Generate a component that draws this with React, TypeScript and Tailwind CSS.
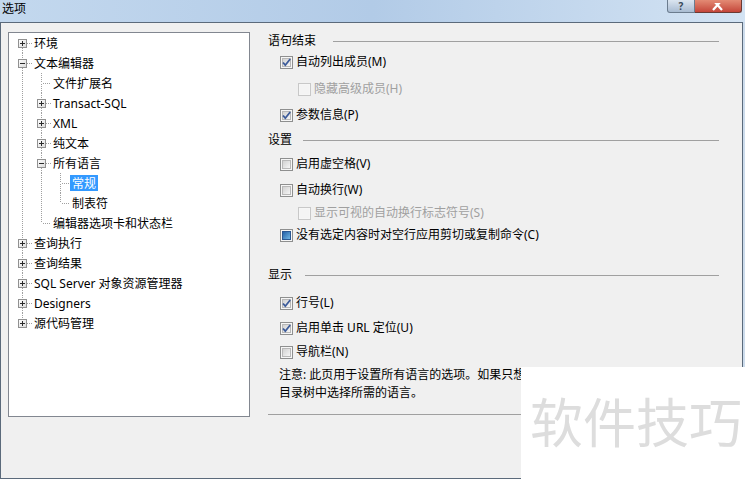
import React from "react";

const FONT = { fontFamily: '"Noto Sans", "Noto Sans CJK SC", sans-serif' };

type Row = {
  label: string;
  depth: number;
  exp?: "plus" | "minus";
  guides: boolean[]; // ancestor columns that carry a full vertical line
  top: boolean;
  bottom: boolean;
  selected?: boolean;
};

const rows: Row[] = [
  { label: "环境", depth: 0, exp: "plus", guides: [], top: false, bottom: true },
  { label: "文本编辑器", depth: 0, exp: "minus", guides: [], top: true, bottom: true },
  { label: "文件扩展名", depth: 1, guides: [true], top: true, bottom: true },
  { label: "Transact-SQL", depth: 1, exp: "plus", guides: [true], top: true, bottom: true },
  { label: "XML", depth: 1, exp: "plus", guides: [true], top: true, bottom: true },
  { label: "纯文本", depth: 1, exp: "plus", guides: [true], top: true, bottom: true },
  { label: "所有语言", depth: 1, exp: "minus", guides: [true], top: true, bottom: true },
  { label: "常规", depth: 2, guides: [true, true], top: true, bottom: true, selected: true },
  { label: "制表符", depth: 2, guides: [true, true], top: true, bottom: false },
  { label: "编辑器选项卡和状态栏", depth: 1, guides: [true], top: true, bottom: false },
  { label: "查询执行", depth: 0, exp: "plus", guides: [], top: true, bottom: true },
  { label: "查询结果", depth: 0, exp: "plus", guides: [], top: true, bottom: true },
  { label: "SQL Server 对象资源管理器", depth: 0, exp: "plus", guides: [], top: true, bottom: true },
  { label: "Designers", depth: 0, exp: "plus", guides: [], top: true, bottom: true },
  { label: "源代码管理", depth: 0, exp: "plus", guides: [], top: true, bottom: false },
];

function GuideCell({ full }: { full: boolean }) {
  return (
    <svg width="19" height="20" className="shrink-0">
      {full && <line x1="9.5" y1="0" x2="9.5" y2="20" stroke="#a0a0a0" strokeDasharray="1 1" />}
    </svg>
  );
}

function NodeCell({ row }: { row: Row }) {
  return (
    <svg width="19" height="20" className="shrink-0">
      <defs>
        <linearGradient id="exp" x1="0" y1="0" x2="1" y2="1">
          <stop offset="0" stopColor="#ffffff" />
          <stop offset="1" stopColor="#d9d9d9" />
        </linearGradient>
      </defs>
      {row.top && <line x1="9.5" y1="0" x2="9.5" y2="10" stroke="#a0a0a0" strokeDasharray="1 1" />}
      {row.bottom && <line x1="9.5" y1="11" x2="9.5" y2="20" stroke="#a0a0a0" strokeDasharray="1 1" />}
      <line x1={row.exp ? 14 : 11} y1="10.5" x2="19" y2="10.5" stroke="#a0a0a0" strokeDasharray="1 1" />
      {row.exp && (
        <g>
          <rect x="5.5" y="6.5" width="8" height="8" fill="url(#exp)" stroke="#919191" />
          <line x1="7" y1="10.5" x2="12" y2="10.5" stroke="#2b2b2b" />
          {row.exp === "plus" && <line x1="9.5" y1="8" x2="9.5" y2="13" stroke="#2b2b2b" />}
        </g>
      )}
    </svg>
  );
}

function Tree() {
  return (
    <div className="w-[242px] h-[385px] mt-[9px] ml-[7px] border border-[#828790] bg-white pl-[4px] shrink-0">
      {rows.map((r) => (
        <div key={r.label} className="flex items-center h-[20px]">
          {r.guides.map((g, i) => (
            <GuideCell key={i} full={g} />
          ))}
          <NodeCell row={r} />
          <span
            className={`h-[16px] leading-[17px] px-[2px] text-[12px] whitespace-nowrap ${
              r.selected ? "bg-[#3399ff] text-white" : "text-black"
            }`}
          >
            {r.label}
          </span>
        </div>
      ))}
    </div>
  );
}

function Check({ state, disabled }: { state: "on" | "off" | "mixed"; disabled?: boolean }) {
  return (
    <svg width="13" height="13" className="shrink-0">
      <defs>
        <linearGradient id="cbin" x1="0" y1="0" x2="1" y2="1">
          <stop offset="0" stopColor="#cfcfcf" />
          <stop offset="1" stopColor="#f8f8f8" />
        </linearGradient>
        <linearGradient id="cbmix" x1="0" y1="0" x2="1" y2="1">
          <stop offset="0" stopColor="#1d5aa3" />
          <stop offset="1" stopColor="#76bde9" />
        </linearGradient>
      </defs>
      <rect x="0.5" y="0.5" width="12" height="12" fill="#f6f6f6" stroke={disabled ? "#c8c8c8" : "#8e8f8f"} />
      {!disabled && <rect x="2.5" y="2.5" width="8" height="8" fill="url(#cbin)" stroke="#b8b8b8" />}
      {disabled && <rect x="2" y="2" width="9" height="9" fill="#f4f4f4" />}
      {state === "on" && (
        <path d="M3 6.5 L5.3 9.2 L10.2 3" fill="none" stroke="#3c5b9a" strokeWidth="1.8" />
      )}
      {state === "mixed" && <rect x="2.5" y="2.5" width="8" height="8" fill="url(#cbmix)" stroke="#2a5792" />}
    </svg>
  );
}

function Header({ label, gap, mt }: { label: string; gap: number; mt: string }) {
  return (
    <div className={`flex items-center h-[16px] ${mt}`}>
      <span className="text-[12px] text-black whitespace-nowrap">{label}</span>
      <div className="h-px flex-1 bg-[#a0a0a0]" style={{ marginLeft: gap }} />
    </div>
  );
}

function Option({
  label,
  state,
  disabled,
  indent,
  mt,
}: {
  label: string;
  state: "on" | "off" | "mixed";
  disabled?: boolean;
  indent?: boolean;
  mt: string;
}) {
  return (
    <div className={`flex items-center h-[16px] gap-[3px] ${indent ? "pl-[30px]" : "pl-[12px]"} ${mt}`}>
      <Check state={state} disabled={disabled} />
      <span className={`text-[12px] whitespace-nowrap ${disabled ? "text-[#a0a0a0]" : "text-black"}`}>{label}</span>
    </div>
  );
}

function OptionsPane() {
  return (
    <div className="ml-[18px] w-[451px] flex flex-col shrink-0">
      <Header label="语句结束" gap={17} mt="mt-[10px]" />
      <Option label="自动列出成员(M)" state="on" mt="mt-[5px]" />
      <Option label="隐藏高级成员(H)" state="off" disabled indent mt="mt-[11px]" />
      <Option label="参数信息(P)" state="on" mt="mt-[10px]" />

      <Header label="设置" gap={11} mt="mt-[9px]" />
      <Option label="启用虚空格(V)" state="off" mt="mt-[8px]" />
      <Option label="自动换行(W)" state="off" mt="mt-[10px]" />
      <Option label="显示可视的自动换行标志符号(S)" state="off" disabled indent mt="mt-[7px]" />
      <Option label="没有选定内容时对空行应用剪切或复制命令(C)" state="mixed" mt="mt-[6px]" />

      <Header label="显示" gap={13} mt="mt-[24px]" />
      <Option label="行号(L)" state="on" mt="mt-[12px]" />
      <Option label="启用单击 URL 定位(U)" state="on" mt="mt-[9px]" />
      <Option label="导航栏(N)" state="off" mt="mt-[8px]" />

      <div className="mt-[6px] pl-[11px] text-[12px] leading-[18px] text-black whitespace-nowrap">
        <div>注意: 此页用于设置所有语言的选项。如果只想更改某一种语言的选项，请在</div>
        <div>目录树中选择所需的语言。</div>
      </div>
      <div className="mt-[12px] h-px bg-[#a0a0a0]" />
    </div>
  );
}

export default function App() {
  return (
    <div className="relative w-[745px] h-[479px] overflow-hidden bg-[#cddcec]" style={FONT}>
      {/* Title bar */}
      <div className="h-[22px] flex bg-gradient-to-r from-[#c3d8ee] via-[#b2cbe7] to-[#d3e3f3]">
        <span className="pl-[2px] pt-[1px] text-[12px] leading-[16px] text-black">选项</span>
        <div className="ml-auto mr-[3px] flex h-[13px]">
          <div className="w-[28px] h-[13px] rounded-bl-[3px] border border-t-0 border-[#6b7c8e] bg-gradient-to-b from-[#dbe5f0] to-[#a9bcd2] flex items-center justify-center">
            <span className="text-[10px] leading-[12px] font-bold text-[#39485a]">?</span>
          </div>
          <div className="w-[47px] h-[13px] rounded-br-[3px] border border-t-0 border-l-0 border-[#6b3a33] bg-gradient-to-b from-[#e38a74] to-[#c4453a] flex items-end justify-center overflow-hidden">
            <svg width="12" height="9" viewBox="0 0 12 9">
              <path d="M1 -3 L10 7 M10 -3 L1 7" stroke="#ffffff" strokeWidth="2.2" />
            </svg>
          </div>
        </div>
      </div>

      {/* Dialog body */}
      <div className="w-[743px] h-[457px] border border-[#5b6a7b] bg-[#f0f0f0] flex items-start">
        <Tree />
        <OptionsPane />
      </div>

      {/* Watermark overlay */}
      <div className="absolute left-[521px] top-[367px] w-[224px] h-[112px] bg-white pl-[9px] pt-[27px]">
        <span
          className="block text-[53px] leading-[53px] text-[#dddddd] whitespace-nowrap"
          style={{ fontFamily: '"Noto Sans CJK SC", sans-serif' }}
        >
          软件技巧
        </span>
      </div>
    </div>
  );
}
